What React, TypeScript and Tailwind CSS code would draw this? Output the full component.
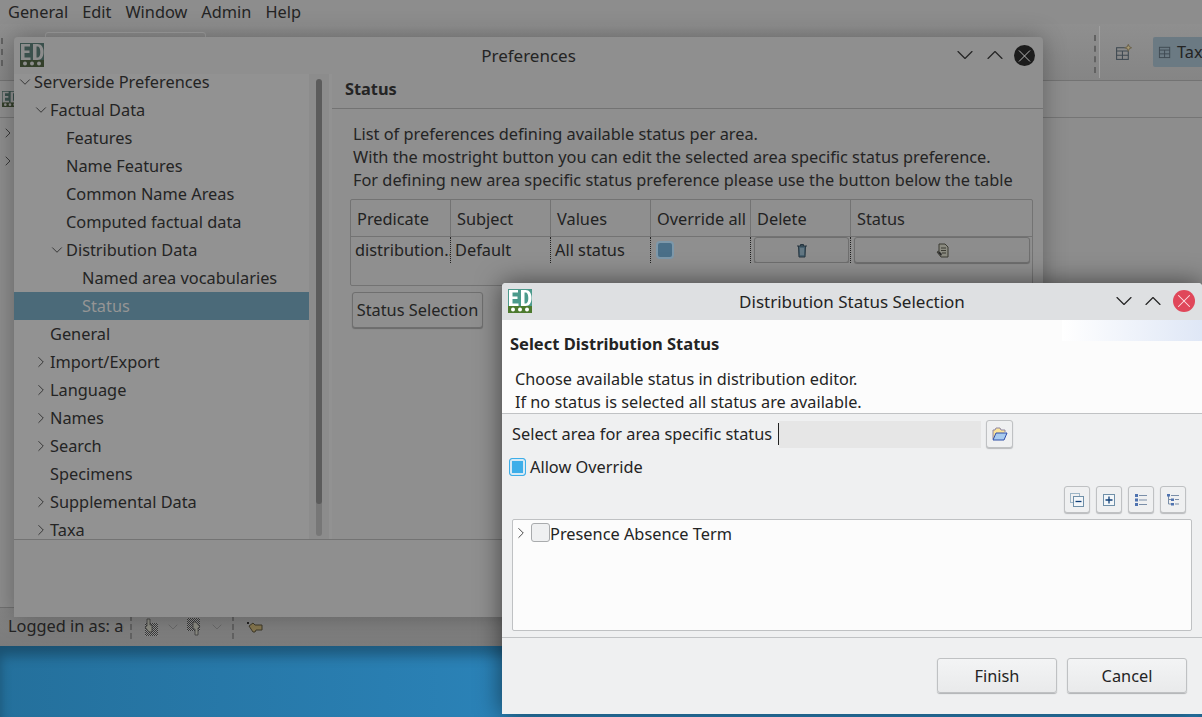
import React from 'react';
import { ChevronDown, ChevronRight, ChevronUp, X } from 'lucide-react';

const treeRows: { label: string; level: number; open?: boolean; closed?: boolean; selected?: boolean }[] = [
  { label: 'Serverside Preferences', level: 0, open: true },
  { label: 'Factual Data', level: 1, open: true },
  { label: 'Features', level: 2 },
  { label: 'Name Features', level: 2 },
  { label: 'Common Name Areas', level: 2 },
  { label: 'Computed factual data', level: 2 },
  { label: 'Distribution Data', level: 2, open: true },
  { label: 'Named area vocabularies', level: 3 },
  { label: 'Status', level: 3, selected: true },
  { label: 'General', level: 1 },
  { label: 'Import/Export', level: 1, closed: true },
  { label: 'Language', level: 1, closed: true },
  { label: 'Names', level: 1, closed: true },
  { label: 'Search', level: 1, closed: true },
  { label: 'Specimens', level: 1 },
  { label: 'Supplemental Data', level: 1, closed: true },
  { label: 'Taxa', level: 1, closed: true },
];

const indentClass = ['pl-[20px]', 'pl-[36px]', 'pl-[52px]', 'pl-[68px]'];

function EdLogo({ className }: { className: string }) {
  return (
    <svg viewBox="0 0 24 24" className={className}>
      <rect width="24" height="17" fill="#4c9a8c" />
      <rect y="17" width="24" height="7" fill="#4d7a2e" />
      <path d="M1 1h9v2.5H4.5v4H9.500v2.500H4.500v4.500H10.500V17H1zM13 1h4.500c4 0 6 3.500 6 8s-2 8-6 8H13zM16.500 3.500v11h1c2 0 2.800-2.500 2.800-5.500s-.8-5.500-2.800-5.500z" fill="#ffffff" />
      <circle cx="5" cy="20.500" r="2" fill="#fff" />
      <circle cx="12" cy="20.500" r="2" fill="#fff" />
      <circle cx="19" cy="20.500" r="2" fill="#fff" />
    </svg>
  );
}

function TableIcon({ className, star }: { className: string; star?: boolean }) {
  return (
    <svg viewBox="0 0 16 16" className={className} fill="none" stroke="#3f4a52" strokeWidth="1">
      <rect x="1.500" y="3.500" width="11" height="11" />
      <path d="M1.500 6.500h11M1.500 10.500h11M7 6.500v8" />
      {star && <path d="M12.500 0.500l1 2 2 1-2 1-1 2-1-2-2-1 2-1z" fill="#a89a70" stroke="#6f6650" />}
    </svg>
  );
}

function Handle() {
  return <div className="w-0 h-full border-l-2 border-dashed border-[#626262]" />;
}

function HandIcon({ id, flip }: { id: string; flip?: boolean }) {
  return (
    <svg viewBox="0 0 15 18" className={flip ? 'w-[15px] h-[18px] rotate-180' : 'w-[15px] h-[18px]'}>
      <defs>
        <pattern id={id} width="2" height="2" patternUnits="userSpaceOnUse">
          <rect width="2" height="2" fill="#8f8f8f" />
          <rect width="1" height="1" fill="#3a3a3a" />
          <rect x="1" y="1" width="1" height="1" fill="#3a3a3a" />
        </pattern>
      </defs>
      <rect x="2" y="5" width="13" height="13" fill={`url(#${id})`} />
      <path d="M4 1h3v6h2v7H6L2 9l2-1z" fill="#8b8b82" stroke="#3c3c3c" strokeWidth="0.8" />
    </svg>
  );
}

function HeaderCell({ label, w }: { label: string; w: string }) {
  return <div className={`${w} h-full flex items-center pl-[6px] pt-[1px] border-r border-[#737373] text-[#222]`}>{label}</div>;
}

function RowCell({ w, children }: { w: string; children: React.ReactNode }) {
  return (
    <div className={`${w} h-[26px] flex items-center pl-[4px] pr-[1px] border-r border-dotted border-[#222] text-[#222] whitespace-nowrap overflow-hidden`}>
      {children}
    </div>
  );
}

function TinyButton({ children }: { children: React.ReactNode }) {
  return (
    <div className="w-[26px] h-[27px] flex items-center justify-center rounded-[3px] border border-[#bfc1c3] bg-[#eff0f1] shadow-[0_1px_1px_#b8babc]">
      {children}
    </div>
  );
}

export default function App() {
  return (
    <div className="relative w-[1202px] h-[717px] overflow-hidden bg-[#8d8d8d] text-[16.33px] leading-[22px] text-[#242424] font-['Noto_Sans',sans-serif]">
      {/* Workbench behind the dialogs */}
      <div className="flex flex-col h-full">
        <div className="h-[24px] flex items-center gap-[14px] pl-[8px] shrink-0">
          {['General', 'Edit', 'Window', 'Admin', 'Help'].map(item => (
            <span key={item}>{item}</span>
          ))}
        </div>

        <div className="h-[57px] shrink-0 border-b border-[#737373] bg-gradient-to-b from-[#8f8f8f] to-[#858585] flex items-center relative">
          <div className="absolute left-[45px] top-[8px] w-[161px] h-[10px] rounded-t-[3px] border border-[#a0a0a0]" />
          <div className="h-[28px] ml-[1px]">
            <Handle />
          </div>
          <div className="flex-1" />
          <div className="h-[38px] mt-[3px]">
            <Handle />
          </div>
          <div className="w-[1px] h-[52px] ml-[3px] bg-[#a0a0a0]" />
          <div className="w-[53px] flex justify-center pr-[6px]">
            <TableIcon className="w-[17px] h-[17px]" star />
          </div>
          <div className="w-[49px] h-[30px] -mt-[1px] pl-[5px] rounded-l-[2px] bg-[#6b7a83] flex items-center gap-[4px] overflow-hidden">
            <TableIcon className="w-[15px] h-[15px] shrink-0" />
            <span>Taxon</span>
          </div>
        </div>

        <div className="h-[37px] shrink-0 border-b border-[#757575] flex items-center pl-[2px]">
          <EdLogo className="w-[16px] h-[16px] brightness-[0.55] saturate-50" />
        </div>

        <div className="flex-1 flex flex-col pt-[1px] pl-0">
          <div className="h-[28px] flex items-center">
            <ChevronRight size={16} strokeWidth={1.2} className="shrink-0" />
          </div>
          <div className="h-[28px] flex items-center">
            <ChevronRight size={16} strokeWidth={1.2} className="shrink-0" />
          </div>
        </div>

        <div className="h-[39px] shrink-0 border-t border-[#707070] bg-gradient-to-b from-[#858585] to-[#7b7b7b] flex items-center pl-[8px]">
          <span className="w-[116px] overflow-hidden whitespace-nowrap -mt-[2px]">Logged in as: admin</span>
          <div className="h-[24px] ml-[6px]">
            <Handle />
          </div>
          <div className="ml-[11px] flex items-center">
            <HandIcon id="dither-a" />
          </div>
          <ChevronDown size={16} strokeWidth={1} className="ml-[7px] text-[#5d5d5d]" />
          <div className="ml-[6px] flex items-center">
            <HandIcon id="dither-b" flip />
          </div>
          <ChevronDown size={16} strokeWidth={1} className="ml-[7px] text-[#5d5d5d]" />
          <div className="h-[24px] ml-[7px]">
            <Handle />
          </div>
          <svg viewBox="0 0 17 13" className="w-[17px] h-[13px] ml-[12px]">
            <path d="M16 4H9L7 2 3 5l4 6h2l1-2h6z" fill="#86774f" stroke="#3f3a2a" />
            <path d="M1 1l2 2M3 1L1 3" stroke="#222" />
          </svg>
        </div>

        <div className="h-[71px] shrink-0 bg-gradient-to-r from-[#24709c] via-[#2c86bd] to-[#2c86bd] shadow-[inset_0_10px_12px_rgba(0,0,0,0.28)]" />
      </div>

      {/* Preferences window */}
      <div className="absolute left-[14px] top-[37px] w-[1029px] h-[580px] flex flex-col rounded-t-[4px] bg-[#8f8f8f] shadow-[0_0_24px_rgba(0,0,0,0.3)]">
        <div className="relative h-[37px] shrink-0 flex items-center justify-center">
          <EdLogo className="absolute left-[6px] top-[6px] w-[24px] h-[24px] brightness-[0.55] saturate-50" />
          <span className="text-[17px]">Preferences</span>
          <ChevronDown size={28} strokeWidth={1} className="absolute right-[64px] top-[4px]" />
          <ChevronUp size={28} strokeWidth={1} className="absolute right-[34px] top-[4px]" />
          <div className="absolute right-[8px] top-[8px] w-[21px] h-[21px] rounded-full bg-[#1c1c1c] flex items-center justify-center">
            <X size={22} strokeWidth={1.1} className="text-[#b8b8b8]" />
          </div>
        </div>

        <div className="flex h-[465px] shrink-0">
          <div className="w-[295px] bg-[#929292] overflow-hidden shrink-0">
            <div className="-mt-[6px]">
              {treeRows.map(row => (
                <div
                  key={row.label}
                  className={`relative h-[28px] flex items-center whitespace-nowrap ${indentClass[row.level]} ${row.selected ? 'bg-[#4b6a79] text-[#959595]' : ''}`}
                >
                  {row.open && <ChevronDown size={18} strokeWidth={1.1} className="-ml-[18px] shrink-0" />}
                  {row.closed && <ChevronRight size={18} strokeWidth={1.1} className="-ml-[18px] shrink-0" />}
                  <span>{row.label}</span>
                </div>
              ))}
            </div>
          </div>
          <div className="w-[20px] shrink-0 bg-[#8c8c8c] pt-[5px] flex justify-center">
            <div className="w-[6px] h-[457px] rounded-full bg-[#777] overflow-hidden ml-[-1px]">
              <div className="w-[6px] h-[425px] rounded-full bg-[#5c5c5c]" />
            </div>
          </div>
          <div className="w-[3px] shrink-0 bg-[#929292]" />

          <div className="flex-1 flex flex-col min-w-0">
            <div className="h-[35px] shrink-0 border-b border-[#737373] flex items-center pl-[13px] pb-[5px] font-bold">
              Status
            </div>
            <div className="pl-[21px] pt-[14px] leading-[23px] whitespace-nowrap">
              <div>List of preferences defining available status per area.</div>
              <div>With the mostright button you can edit the selected area specific status preference.</div>
              <div>For defining new area specific status preference please use the button below the table</div>
            </div>

            <div className="ml-[18px] mt-[7px] w-[683px] h-[87px] shrink-0 border border-[#737373] rounded-[2px]">
              <div className="h-[37px] flex border-b border-[#737373]">
                <HeaderCell label="Predicate" w="w-[100px]" />
                <HeaderCell label="Subject" w="w-[100px]" />
                <HeaderCell label="Values" w="w-[100px]" />
                <HeaderCell label="Override all" w="w-[100px]" />
                <HeaderCell label="Delete" w="w-[100px]" />
                <div className="flex-1 h-full flex items-center pl-[6px] pt-[1px]">Status</div>
              </div>
              <div className="h-[29px] flex items-start">
                <RowCell w="w-[100px]">distribution..</RowCell>
                <RowCell w="w-[100px]">Default</RowCell>
                <RowCell w="w-[100px]">All status</RowCell>
                <RowCell w="w-[100px]">
                  <div className="w-[18px] h-[18px] rounded-[4px] border-2 border-[#7d98aa] bg-[#4a6f88] ml-[1px]" />
                </RowCell>
                <RowCell w="w-[100px]">
                  <div className="w-[95px] h-[26px] -ml-[1px] flex items-center justify-center rounded-[3px] border border-[#6f6f6f] bg-[#8d8d8d] shadow-[0_1px_1px_#6a6a6a]">
                    <svg viewBox="0 0 12 15" className="w-[12px] h-[15px]">
                      <path d="M1 3h10M4.500 3V1.500h3V3M2.500 3l.5 11h6l.5-11" fill="#46606f" stroke="#26353f" />
                      <path d="M5 5v7M7 5v7" stroke="#7f8d96" />
                    </svg>
                  </div>
                </RowCell>
                <div className="flex-1 h-[26px] flex items-center pl-[3px]">
                  <div className="w-[176px] h-[26px] flex items-center justify-center rounded-[3px] border border-[#6f6f6f] bg-[#8d8d8d] shadow-[0_1px_1px_#6a6a6a]">
                    <svg viewBox="0 0 13 15" className="w-[13px] h-[15px]">
                      <path d="M3 1h6l3 3v10H5L1 9l2-1z" fill="#8a8a80" stroke="#3b3b33" />
                      <path d="M5 5h5M5 7.500h5M6 10h4" stroke="#3b3b33" />
                      <path d="M3 8l3 3-1 2-3-3z" fill="#2c2c2c" />
                    </svg>
                  </div>
                </div>
              </div>
            </div>

            <div className="ml-[20px] mt-[6px] w-[131px] h-[36px] shrink-0 flex items-center justify-center rounded-[3px] border border-[#6f6f6f] bg-[#8f8f8f] shadow-[0_1px_1px_#6a6a6a]">
              Status Selection
            </div>
          </div>
        </div>

        <div className="flex-1 border-t border-[#737373]" />
      </div>

      {/* Distribution Status Selection dialog */}
      <div className="absolute left-[502px] top-[283px] w-[700px] h-[431px] flex flex-col rounded-t-[4px] bg-[#eff0f1] shadow-[0_0_26px_rgba(0,0,0,0.55)]">
        <div className="relative h-[37px] shrink-0 rounded-t-[4px] bg-[#dee0e2] flex items-center justify-center">
          <EdLogo className="absolute left-[6px] top-[6px] w-[24px] h-[24px]" />
          <span className="text-[17px]">Distribution Status Selection</span>
          <ChevronDown size={28} strokeWidth={1} className="absolute right-[64px] top-[4px]" />
          <ChevronUp size={28} strokeWidth={1} className="absolute right-[35px] top-[4px]" />
          <div className="absolute right-[7px] top-[7px] w-[22px] h-[22px] rounded-full bg-[#e0475a] flex items-center justify-center">
            <X size={22} strokeWidth={1.1} className="text-[#fbe4e6]" />
          </div>
        </div>

        <div className="relative h-[94px] shrink-0 bg-[#fcfcfc] border-b border-[#c0c2c4] pt-[13px] pl-[8px]">
          <div className="absolute right-0 top-0 w-[140px] h-[21px] bg-gradient-to-r from-[#ffffff] to-[#dfe7f6]" />
          <div className="relative font-bold text-[16.5px]">Select Distribution Status</div>
          <div className="pl-[5px] pt-[13px] leading-[23px] text-[16.25px]">
            <div>Choose available status in distribution editor.</div>
            <div>If no status is selected all status are available.</div>
          </div>
        </div>

        <div className="flex items-center h-[28px] mt-[6px] pl-[10px] shrink-0">
          <span className="w-[266px] whitespace-nowrap">Select area for area specific status</span>
          <div className="w-[1px] h-[22px] bg-[#222]" />
          <div className="w-[202px] h-[27px] bg-[#e6e6e6]" />
          <div className="ml-[5px] w-[27px] h-[28px] flex items-center justify-center rounded-[3px] border border-[#bfc1c3] bg-[#eff0f1] shadow-[0_1px_1px_#b8babc]">
            <svg viewBox="0 0 16 14" className="w-[16px] h-[14px]">
              <path d="M1 12V3h2l1-2h4l1 2h4v2" fill="#fbe39a" stroke="#8f86a0" />
              <path d="M1 13l3-7h11l-3 7z" fill="#a9cbef" stroke="#2f4fa8" />
            </svg>
          </div>
        </div>

        <div className="flex items-center h-[20px] mt-[9px] pl-[7px] shrink-0">
          <div className="w-[17px] h-[18px] rounded-[3px] border border-[#3daee9] bg-[#3daee9] shadow-[inset_0_0_0_2px_#d6e9f5]" />
          <span className="ml-[4px]">Allow Override</span>
        </div>

        <div className="flex justify-end gap-[6px] mt-[9px] pr-[16px] h-[27px] shrink-0">
          <TinyButton>
            <svg viewBox="0 0 14 14" className="w-[14px] h-[14px]" fill="none">
              <rect x="0.500" y="0.500" width="9" height="9" stroke="#9db5c6" />
              <rect x="3.500" y="3.500" width="10" height="10" fill="#f2f6f9" stroke="#6f8fa8" />
              <path d="M5.500 8.500h6" stroke="#0f3f78" strokeWidth="1.3" />
            </svg>
          </TinyButton>
          <TinyButton>
            <svg viewBox="0 0 12 12" className="w-[12px] h-[12px]" fill="none">
              <rect x="0.500" y="0.500" width="11" height="11" fill="#f2f6f9" stroke="#6f8fa8" />
              <path d="M2.500 6h7M6 2.500v7" stroke="#0f3f78" strokeWidth="1.3" />
            </svg>
          </TinyButton>
          <TinyButton>
            <svg viewBox="0 0 12 12" className="w-[12px] h-[12px]">
              <rect x="0" y="0" width="3" height="3" fill="#4f73b0" />
              <rect x="0" y="4.500" width="3" height="3" fill="#4f73b0" />
              <rect x="0" y="9" width="3" height="3" fill="#4f73b0" />
              <path d="M4 1.500h8M4 6h8M4 10.500h8" stroke="#7a8ea8" />
            </svg>
          </TinyButton>
          <TinyButton>
            <svg viewBox="0 0 12 12" className="w-[12px] h-[12px]" fill="none">
              <path d="M1.500 1v9h3M1.500 5.500h3" stroke="#7a8ea8" />
              <rect x="0" y="0" width="3" height="2.500" fill="#4f73b0" />
              <rect x="4" y="4.500" width="3" height="2.500" fill="#4f73b0" />
              <rect x="4" y="9" width="3" height="2.500" fill="#4f73b0" />
              <path d="M4 1.500h8M8 5.500h4M8 10h4" stroke="#7a8ea8" />
            </svg>
          </TinyButton>
        </div>

        <div className="mt-[6px] ml-[10px] w-[680px] h-[112px] shrink-0 rounded-[2px] border border-[#bfc1c3] bg-[#fcfcfc] flex items-start pt-[3px]">
          <ChevronRight size={18} strokeWidth={1.1} className="mt-[1px] -ml-[1px]" />
          <div className="w-[19px] h-[19px] ml-[1px] rounded-[3px] border border-[#a9abad] bg-[#eff0f1]" />
          <span>Presence Absence Term</span>
        </div>

        <div className="mt-[6px] h-[1px] shrink-0 bg-[#c0c2c4]" />

        <div className="flex justify-end gap-[10px] pr-[15px] pt-[20px]">
          <div className="w-[120px] h-[35px] flex items-center justify-center rounded-[3px] border border-[#bfc1c3] bg-gradient-to-b from-[#f3f4f5] to-[#e9eaeb] shadow-[0_1px_1px_#b0b2b4]">
            Finish
          </div>
          <div className="w-[120px] h-[35px] flex items-center justify-center rounded-[3px] border border-[#bfc1c3] bg-gradient-to-b from-[#f3f4f5] to-[#e9eaeb] shadow-[0_1px_1px_#b0b2b4]">
            Cancel
          </div>
        </div>
      </div>
    </div>
  );
}
